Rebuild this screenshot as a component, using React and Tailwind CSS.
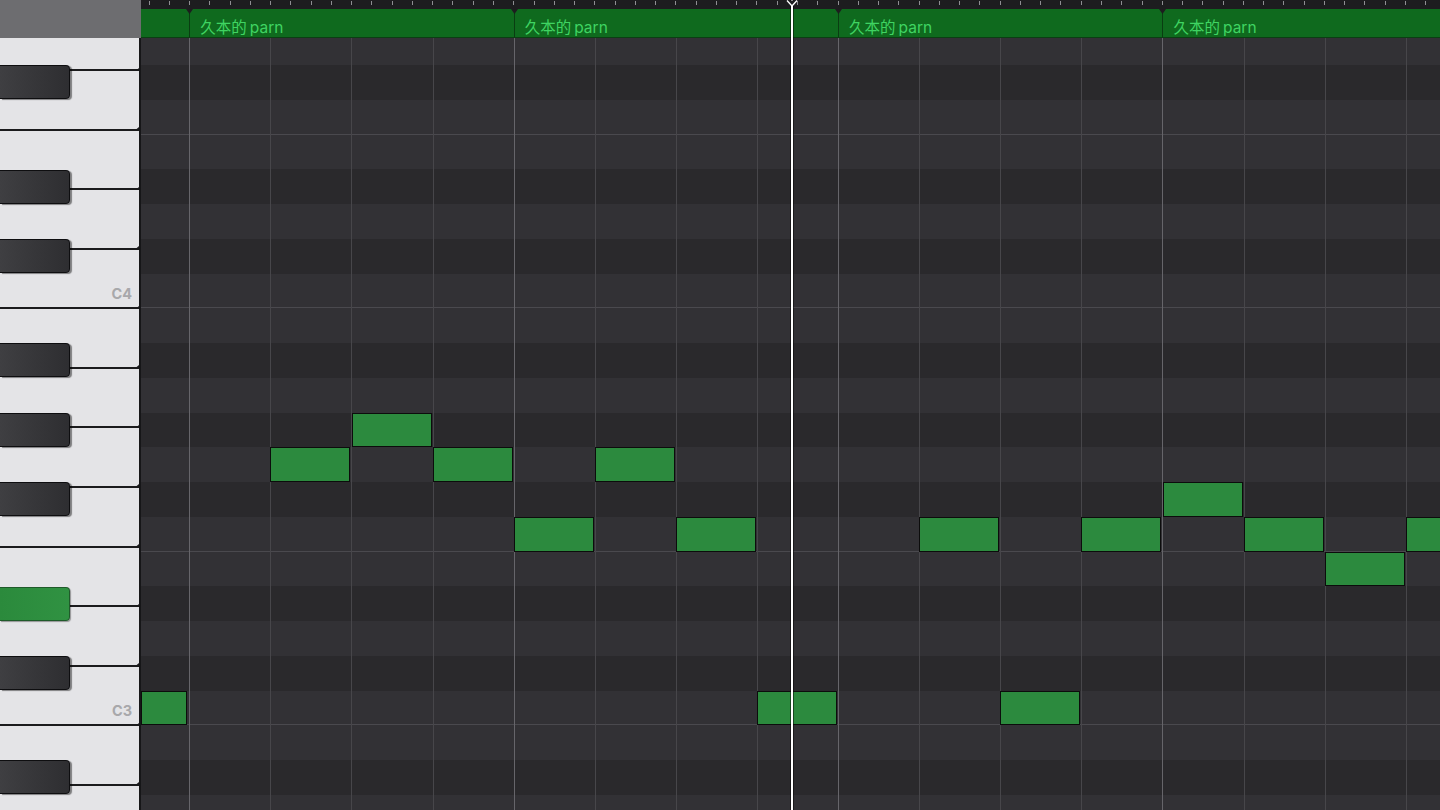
import React from "react";

const ROW = 34.75;
const BEAT = 81.1;
const BAR0 = 48.3; // x of first bar line inside grid

const PITCHES = [
  "G4", "F#4", "F4", "E4", "D#4", "D4", "C#4", "C4", "B3", "A#3", "A3", "G#3",
  "G3", "F#3", "F3", "E3", "D#3", "D3", "C#3", "C3", "B2", "A#2", "A2",
];
const WHITE = ["G4", "F4", "E4", "D4", "C4", "B3", "A3", "G3", "F3", "E3", "D3", "C3", "B2", "A2"];

const NOTES = [
  { p: "C3", b: -0.59, w: 0.58 },
  { p: "G3", b: 1 },
  { p: "G#3", b: 2 },
  { p: "G3", b: 3 },
  { p: "F3", b: 4 },
  { p: "G3", b: 5 },
  { p: "F3", b: 6 },
  { p: "C3", b: 7 },
  { p: "F3", b: 9 },
  { p: "C3", b: 10 },
  { p: "F3", b: 11 },
  { p: "F#3", b: 12 },
  { p: "F3", b: 13 },
  { p: "E3", b: 14 },
  { p: "F3", b: 15 },
];

const isBlack = (p) => p.includes("#");
const rowIndex = (p) => PITCHES.indexOf(p);

function Ruler() {
  const ticks = Array.from({ length: 64 }, (_, i) => i);
  return (
    <div className="h-[9px] bg-[#1d1d1f] flex overflow-hidden">
      <div className="w-[7.5px] shrink-0" />
      {ticks.map((i) => (
        <div key={i} className="w-[20.275px] shrink-0 flex">
          <div className="w-px h-[4px] mt-[1px] bg-[#8e8e92]" />
        </div>
      ))}
    </div>
  );
}

function Header() {
  const regions = [0, 1, 2, 3];
  return (
    <div className="h-[29px] flex bg-[#0f6a1e] border-b border-[#0b3f13] overflow-hidden">
      <div className="w-[48.3px] shrink-0" />
      {regions.map((i) => (
        <div
          key={i}
          className="relative w-[324.4px] shrink-0 border-l border-[#0a3d12] flex items-center pl-[10px] pt-[10px]"
        >
          <svg className="absolute -left-[4px] top-0" width="7" height="5" viewBox="0 0 7 5">
            <path d="M0 0 L7 0 L3.5 5 Z" fill="#1d1d1f" />
          </svg>
          <span
            className="text-[15.5px] leading-none text-[#3fd462] whitespace-nowrap"
            style={{ fontFamily: "Inter, 'Noto Sans CJK SC', sans-serif" }}
          >
            久本的<span className="ml-[3px]">parn</span>
          </span>
        </div>
      ))}
    </div>
  );
}

function Keyboard() {
  const blacks = PITCHES.map((p, i) => ({ p, i })).filter((x) => isBlack(x.p));
  return (
    <div className="w-[141px] shrink-0 border-r-2 border-[#161618] overflow-hidden bg-[#e3e3e6]">
      <div className="relative -mt-[26.55px]">
        {WHITE.map((k) => (
          <div
            key={k}
            className="relative h-[59.57px] border-b-2 border-[#1b1b1d] bg-[#e4e4e7] flex items-end justify-end pr-[7px] pb-[6px]"
          >
            <svg className="absolute right-0 -bottom-[3.5px]" width="3" height="5" viewBox="0 0 3 5">
              <path d="M3 0 L0 2.5 L3 5 Z" fill="#1b1b1d" />
            </svg>
            {k.startsWith("C") && (
              <span
                className="text-[14.5px] font-bold leading-none text-[#a8a8ab]"
                style={{ fontFamily: "Inter, 'Liberation Sans', sans-serif" }}
              >
                {k}
              </span>
            )}
          </div>
        ))}
        {blacks.map(({ p, i }) => {
          const active = p === "D#3";
          return (
            <div
              key={p}
              className={
                active
                  ? "absolute left-0 w-[70px] h-[34px] rounded-r-[4px] border-[1.5px] border-l-0 border-[#1f5a2a] bg-gradient-to-r from-[#2b8a3c] to-[#309242] shadow-[1px_1px_1px_rgba(0,0,0,0.35)]"
                  : "absolute left-0 w-[70px] h-[34px] rounded-r-[4px] border-[1.5px] border-l-0 border-[#0e0e10] bg-gradient-to-r from-[#3f3f42] to-[#2e2e31] shadow-[2px_1px_1px_rgba(0,0,0,0.45)]"
              }
              style={{ top: 19.05 + i * ROW }}
            />
          );
        })}
      </div>
    </div>
  );
}

function Grid() {
  const cols = Array.from({ length: 16 }, (_, i) => i);
  return (
    <div className="relative flex-1 overflow-hidden">
      <div className="relative -mt-[7.75px]">
        {PITCHES.map((p) => (
          <div
            key={p}
            className={
              (isBlack(p) ? "bg-[#2a292c] " : "bg-[#323135] ") +
              "h-[34.75px] " +
              ((p.startsWith("F") || p.startsWith("C")) && !isBlack(p)
                ? "border-b border-[#4a494e]"
                : "")
            }
          />
        ))}
        <div className="absolute inset-0 flex pointer-events-none">
          <div className="w-[48.3px] shrink-0" />
          {cols.map((i) => (
            <div
              key={i}
              className={
                "w-[81.1px] shrink-0 border-l " +
                (i % 4 === 0 ? "border-[#66656a]" : "border-[#47464a]")
              }
            />
          ))}
        </div>
        {NOTES.map((n, k) => {
          const left = BAR0 + n.b * BEAT;
          const width = (n.w ?? 1) * BEAT - 1;
          return (
            <div
              key={k}
              className="absolute h-[34.75px] bg-[#2c8a3e] border-[1.5px] border-[#0c0c0c]"
              style={{ left: Math.max(left, 0), width: left < 0 ? width + left : width, top: rowIndex(n.p) * ROW }}
            />
          );
        })}
      </div>
    </div>
  );
}

export default function App() {
  return (
    <div className="relative w-[1440px] h-[810px] overflow-hidden bg-[#2a292c] flex flex-col select-none">
      <div className="h-[38px] flex shrink-0">
        <div className="w-[141px] shrink-0 bg-[#6d6d70]" />
        <div className="flex-1 flex flex-col overflow-hidden">
          <Ruler />
          <Header />
        </div>
      </div>
      <div className="flex-1 flex overflow-hidden">
        <Keyboard />
        <Grid />
      </div>
      {/* playhead */}
      <div className="absolute top-0 bottom-0 left-[791px] w-[2px] bg-white shadow-[0_0_0_1px_rgba(0,0,0,0.5)]" />
      <svg className="absolute top-0 left-[786px]" width="12" height="7" viewBox="0 0 12 7">
        <path d="M1 0.5 L6 6 L11 0.5" fill="#1d1d1f" stroke="#ffffff" strokeWidth="1.3" />
      </svg>
    </div>
  );
}
